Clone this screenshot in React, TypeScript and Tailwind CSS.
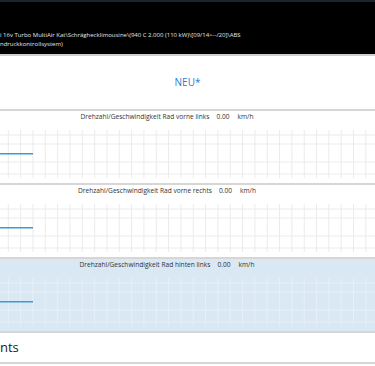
import React from 'react';

const font = { fontFamily: '"Open Sans", "Noto Sans", sans-serif' };

type Channel = {
  label: string;
  value: string;
  unit: string;
  active?: boolean;
};

const channels: Channel[] = [
  { label: 'Drehzahl/Geschwindigkeit Rad vorne links', value: '0.00', unit: 'km/h' },
  { label: 'Drehzahl/Geschwindigkeit Rad vorne rechts', value: '0.00', unit: 'km/h' },
  { label: 'Drehzahl/Geschwindigkeit Rad hinten links', value: '0.00', unit: 'km/h', active: true },
];

function Grid({ active }: { active?: boolean }) {
  const lineColor = active ? '#e6eff8' : '#ebebeb';
  const cols = Array.from({ length: 30 }, (_, i) => 8.3 + i * 12.33);
  const rows = [5, 14, 32, 44];
  return (
    <svg width="375" height="48" className="block">
      {cols.map((x) => (
        <line key={x} x1={x} y1={0} x2={x} y2={48} stroke={lineColor} strokeWidth={1} />
      ))}
      {rows.map((y) => (
        <line key={y} x1={0} y1={y} x2={375} y2={y} stroke={lineColor} strokeWidth={1} />
      ))}
      <line x1={0} y1={23.7} x2={33} y2={23.7} stroke="#3b9bd8" strokeWidth={1.6} />
    </svg>
  );
}

function ChannelPanel({ channel }: { channel: Channel }) {
  return (
    <div
      className={`h-[74px] border-t-2 border-[#d6d6d6] flex flex-col ${
        channel.active ? 'bg-[#dae8f4]' : 'bg-white'
      }`}
    >
      <div className="w-[334px] h-[19px] pt-[1px] flex justify-center items-start text-[6.6px] text-[#333] leading-[9px]">
        <span>{channel.label}</span>
        <span className="ml-[7px]">{channel.value}</span>
        <span className="ml-[8px]">{channel.unit}</span>
      </div>
      <Grid active={channel.active} />
    </div>
  );
}

export default function App() {
  return (
    <div className="w-[375px] h-[366px] overflow-hidden bg-white" style={font}>
      {/* Kopfzeile mit Fahrzeugdaten */}
      <div className="h-[54px] bg-black border-t-2 border-[#1c2430] flex flex-col justify-end pb-[5px]">
        <div className="text-[6px] leading-[9px] text-[#e6e6e6] whitespace-nowrap">
          i 16v Turbo MultiAir Kat\Schräghecklimousine\(940 C 2.000 (110 kW)\[09/14&gt;--/20]\ABS
        </div>
        <div className="text-[6px] leading-[9px] text-[#e6e6e6] whitespace-nowrap">ndruckkontrollsystem)</div>
      </div>
      <div className="h-[2px] bg-[#cfcfcf]" />

      <div className="h-[53px] flex items-center justify-center">
        <span className="text-[10px] text-[#2b7cd0]">NEU*</span>
      </div>

      {channels.map((c) => (
        <ChannelPanel key={c.label} channel={c} />
      ))}

      <div className="border-t-2 border-[#d6d6d6] h-[31px] flex items-center">
        <span className="text-[13px] text-[#222]">nts</span>
      </div>
      <div className="h-[2px] bg-[#d6d6d6]" />
    </div>
  );
}
